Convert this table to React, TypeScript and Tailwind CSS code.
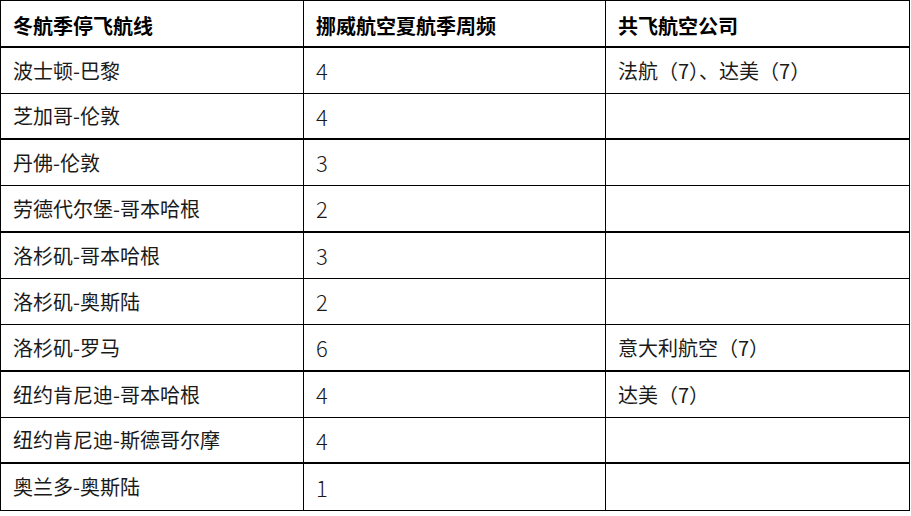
const rows: { route: string; freq: string; partner: string; h: string; line: string }[] = [
  { route: '波士顿-巴黎', freq: '4', partner: '法航（7）、达美（7）', h: 'h-[46px]', line: 'border-b' },
  { route: '芝加哥-伦敦', freq: '4', partner: '', h: 'h-[46px]', line: 'border-b-2' },
  { route: '丹佛-伦敦', freq: '3', partner: '', h: 'h-[46px]', line: 'border-b' },
  { route: '劳德代尔堡-哥本哈根', freq: '2', partner: '', h: 'h-[47px]', line: 'border-b-2' },
  { route: '洛杉矶-哥本哈根', freq: '3', partner: '', h: 'h-[46px]', line: 'border-b' },
  { route: '洛杉矶-奥斯陆', freq: '2', partner: '', h: 'h-[46px]', line: 'border-b' },
  { route: '洛杉矶-罗马', freq: '6', partner: '意大利航空（7）', h: 'h-[47px]', line: 'border-b-2' },
  { route: '纽约肯尼迪-哥本哈根', freq: '4', partner: '达美（7）', h: 'h-[46px]', line: 'border-b' },
  { route: '纽约肯尼迪-斯德哥尔摩', freq: '4', partner: '', h: 'h-[46px]', line: 'border-b-2' },
  { route: '奥兰多-奥斯陆', freq: '1', partner: '', h: 'h-[47px]', line: 'border-b' },
]

const font = "font-['Noto_Sans_CJK_SC',sans-serif]"

export default function App() {
  return (
    <div className="w-[911px] h-[516px] bg-white overflow-hidden">
      <div className={`w-[910px] border-t border-l border-r border-black ${font}`}>
        {/* 表头 */}
        <div className="flex h-[47px] border-b-2 border-black text-[20px] font-bold text-black">
          <div className="w-[303px] border-r border-black flex items-center pl-3 pt-1">冬航季停飞航线</div>
          <div className="w-[302px] border-r border-black flex items-center pl-3 pt-1">挪威航空夏航季周频</div>
          <div className="flex-1 flex items-center pl-3 pt-1">共飞航空公司</div>
        </div>

        {rows.map((r) => (
          <div key={r.route} className={`flex ${r.h} ${r.line} border-black text-[20px] font-normal text-[#1a1a1a]`}>
            <div className="w-[303px] border-r border-black flex items-center pl-3">{r.route}</div>
            <div className="w-[302px] border-r border-black flex items-center pl-3 text-[22px] font-light">{r.freq}</div>
            <div className="flex-1 flex items-center pl-3">{r.partner}</div>
          </div>
        ))}
      </div>
    </div>
  )
}
